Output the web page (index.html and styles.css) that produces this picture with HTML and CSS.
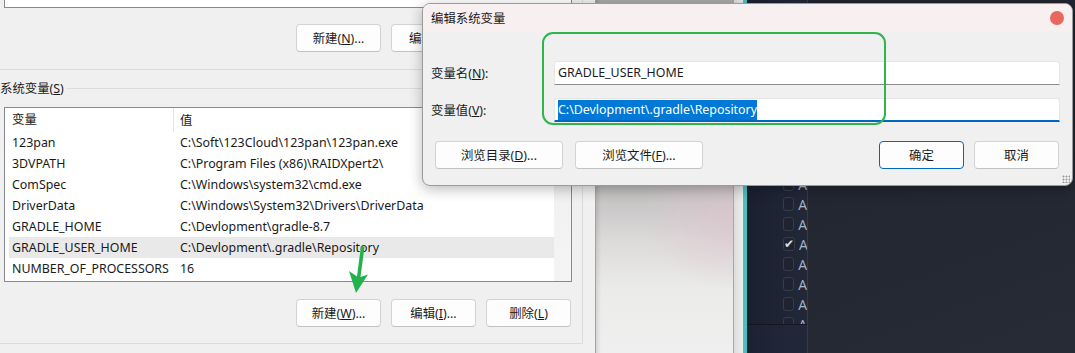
FILE: index.html
```html
<!doctype html>
<html lang="zh-CN">
  <head>
    <meta charset="UTF-8" />
    <title>环境变量</title>
    <link rel="stylesheet" href="styles.css">
  </head>
  <body>
    <div class="desktop">
      <section class="env-window">
        <div class="group group-user">
          <div class="listbox listbox-top">
            <div class="row row-cut">
              <span class="col-name">IDEA_USER_PATH</span>
              <span class="col-value">C:\Users\app\AppData\Temp</span>
            </div>
          </div>
          <div class="btn-row">
            <button class="btn">新建(<u>N</u>)...</button>
            <button class="btn">编辑(<u>E</u>)...</button>
            <button class="btn">删除(<u>D</u>)</button>
          </div>
        </div>

        <fieldset class="group group-system">
          <legend>系统变量(<u>S</u>)</legend>
          <div class="listbox">
            <div class="list-body">
              <div class="list-head">
                <span class="col-name">变量</span>
                <span class="col-value">值</span>
              </div>
              <div class="row"><span class="col-name">123pan</span><span class="col-value">C:\Soft\123Cloud\123pan\123pan.exe</span></div>
              <div class="row"><span class="col-name">3DVPATH</span><span class="col-value">C:\Program Files (x86)\RAIDXpert2\</span></div>
              <div class="row"><span class="col-name">ComSpec</span><span class="col-value">C:\Windows\system32\cmd.exe</span></div>
              <div class="row"><span class="col-name">DriverData</span><span class="col-value">C:\Windows\System32\Drivers\DriverData</span></div>
              <div class="row"><span class="col-name">GRADLE_HOME</span><span class="col-value">C:\Devlopment\gradle-8.7</span></div>
              <div class="row selected"><span class="col-name">GRADLE_USER_HOME</span><span class="col-value">C:\Devlopment\.gradle\Repository</span></div>
              <div class="row"><span class="col-name">NUMBER_OF_PROCESSORS</span><span class="col-value">16</span></div>
            </div>
            <div class="scrollbar"></div>
          </div>
          <div class="btn-row">
            <button class="btn">新建(<u>W</u>)...</button>
            <button class="btn">编辑(<u>I</u>)...</button>
            <button class="btn">删除(<u>L</u>)</button>
          </div>
        </fieldset>
      </section>

      <div class="wallpaper"></div>
      <div class="window-edge"></div>

      <section class="dark-app">
        <div class="filter-col">
          <ul class="check-list">
            <li><span class="box"></span>A</li>
            <li><span class="box"></span>A</li>
            <li><span class="box"></span>A</li>
            <li><span class="box"></span>A</li>
            <li><span class="box"></span>A</li>
            <li><span class="box"></span>A</li>
            <li><span class="box"></span>A</li>
            <li><span class="box"></span>A</li>
            <li><span class="box"></span>A</li>
            <li><span class="box"></span>A</li>
            <li><span class="box"></span>A</li>
            <li><span class="box checked">✔</span>A</li>
            <li><span class="box"></span>A</li>
            <li><span class="box"></span>A</li>
            <li><span class="box"></span>A</li>
            <li><span class="box"></span>A</li>
          </ul>
          <div class="filter-foot"></div>
        </div>
        <div class="dark-main"></div>
      </section>

      <!-- edit dialog floats over the other windows -->
      <div class="dialog">
        <div class="dialog-title">
          <span>编辑系统变量</span>
          <span class="close-dot"></span>
        </div>
        <div class="dialog-form">
          <label>变量名(<u>N</u>):</label>
          <div class="field">GRADLE_USER_HOME</div>
          <label>变量值(<u>V</u>):</label>
          <div class="field focused"><span class="sel">C:\Devlopment\.gradle\Repository</span></div>
        </div>
        <div class="dialog-buttons">
          <button class="btn btn-wide">浏览目录(<u>D</u>)...</button>
          <button class="btn btn-wide">浏览文件(<u>F</u>)...</button>
          <span class="spacer"></span>
          <button class="btn btn-default">确定</button>
          <button class="btn">取消</button>
        </div>
        <div class="mark-box"></div>
        <span class="grip"></span>
      </div>

      <svg class="arrow" width="40" height="60" viewBox="0 0 40 60">
        <path d="M21 6 L24.5 7 L20.5 37 L28 34.5 L16 53 L9 31 L17 36.5 Z" fill="#22b24c" />
      </svg>
    </div>
  </body>
</html>
```

FILE: styles.css
```css
body {
  margin: 0;
  overflow: hidden;
  font-family: "Noto Sans", "Noto Sans CJK SC", sans-serif;
  font-size: 12.4px;
  color: #1a1a1a;
}
.desktop {
  position: relative;
  display: flex;
  width: 1075px;
  height: 353px;
  overflow: hidden;
}

/* environment variables window */
.env-window {
  flex: none;
  width: 596px;
  box-sizing: border-box;
  border-right: 1px solid #a3a3a3;
  background: #f0f0f0;
}
.group {
  width: 583px;
  box-sizing: border-box;
  border: 1px solid #dcdcdc;
  border-left: none;
}
.group-user {
  height: 70px;
  border-top: none;
  padding: 0 10px 0 4px;
}
.group-system {
  margin: 10px 0 0;
  padding: 0 10px 16px 4px;
}
.group-system legend {
  margin-left: -4px;
  padding: 0 3px 0 0;
  line-height: 17px;
}
.listbox {
  display: flex;
  height: 175px;
  margin-top: 10px;
  box-sizing: border-box;
  border: 1px solid #86898f;
  background: #fff;
  overflow: hidden;
}
.listbox-top {
  display: block;
  height: 8px;
  margin-top: 0;
  border-top: none;
}
.row-cut {
  margin-top: -18px;
}
.list-body {
  flex: 1;
  padding-left: 4px;
}
.scrollbar {
  width: 17px;
  background: linear-gradient(#e9e9e9, #f2f2f2 60%, #f4f4f4);
}
.list-head,
.row {
  display: flex;
  align-items: center;
  white-space: nowrap;
}
.list-head {
  height: 24px;
}
.row {
  height: 21px;
}
.row.selected {
  background: #e9e9e9;
}
.col-name {
  width: 165px;
  box-sizing: border-box;
  padding-left: 3px;
  overflow: hidden;
}
.list-head .col-name {
  border-right: 1px solid #e3e3e3;
  line-height: 24px;
}
.col-value {
  padding-left: 6px;
}
.btn-row {
  display: flex;
  justify-content: flex-end;
  gap: 10px;
  padding-right: 1px;
  margin-top: 16px;
}
.group-system .btn-row {
  margin-top: 17px;
}
.btn {
  width: 85px;
  height: 28px;
  box-sizing: border-box;
  padding: 0;
  border: 1px solid #d3d3d3;
  border-bottom-color: #c2c2c2;
  border-radius: 4px;
  background: #fdfdfd;
  font: inherit;
  color: #1a1a1a;
}

/* desktop behind */
.wallpaper {
  width: 137px;
  flex: none;
  background:
    linear-gradient(90deg, rgba(0, 0, 0, 0.1), transparent 5px),
    radial-gradient(ellipse 90px 70px at 100% 62%, rgba(222, 196, 206, 0.7), transparent),
    linear-gradient(#a9a9a9 0%, #bdbcbc 52%, #dcdad9 68%, #ebebea 82%, #efefef 100%);
}
.window-edge {
  width: 10px;
  flex: none;
  box-sizing: border-box;
  border-left: 1px solid #a7a7a7;
  background: linear-gradient(90deg, #dcdcdc, #ececec);
}

/* dark app on the right */
.dark-app {
  flex: 1;
  display: flex;
  border-left: 4px solid #4cc0bf;
  background: #1d2130;
}
.filter-col {
  display: flex;
  flex-direction: column;
  width: 61px;
  box-sizing: border-box;
  border-right: 1px solid #363a45;
  background: linear-gradient(90deg, #1b2030, #222838);
}
.check-list {
  height: 324px;
  margin: 0;
  padding: 14px 0 0 36px;
  list-style: none;
  overflow: hidden;
  box-sizing: border-box;
}
.check-list li {
  display: flex;
  align-items: center;
  gap: 4px;
  height: 20px;
  font-family: "Open Sans", sans-serif;
  font-size: 14px;
  color: #a9b6ca;
}
.box {
  width: 14px;
  height: 14px;
  box-sizing: border-box;
  border: 1px solid #363c4b;
  border-radius: 3px;
  background: #1e2231;
  font-size: 12px;
  line-height: 12px;
  text-align: center;
  color: #dcdcdc;
}
.filter-foot {
  flex: 1;
  border-top: 1px solid #14171f;
  background: linear-gradient(90deg, #1d2233, #22283a);
}
.dark-main {
  flex: 1;
  background: linear-gradient(160deg, #1f232c, #272b36);
}

/* edit dialog */
.dialog {
  position: absolute;
  left: 422px;
  top: 3px;
  width: 651px;
  height: 183px;
  box-sizing: border-box;
  border: 1px solid #9b9b9b;
  border-radius: 8px;
  background: #f0f0f0;
  box-shadow: 0 3px 14px rgba(0, 0, 0, 0.28);
  overflow: hidden;
}
.dialog-title {
  display: flex;
  align-items: center;
  justify-content: space-between;
  height: 28px;
  padding: 0 8px;
  background: #f8f0f0;
}
.close-dot {
  width: 14px;
  height: 14px;
  border-radius: 50%;
  background: #e9675c;
}
.dialog-form {
  display: grid;
  grid-template-columns: 123px 1fr;
  row-gap: 13px;
  align-items: center;
  padding: 29px 12px 0 8px;
}
.field {
  height: 24px;
  box-sizing: border-box;
  padding-left: 3px;
  border: 1px solid #e6e6e6;
  border-bottom: 1px solid #8b8b8b;
  border-radius: 3px 3px 0 0;
  background: #fff;
  line-height: 22px;
  white-space: nowrap;
}
.field.focused {
  border-bottom: 2px solid #0067c0;
}
.sel {
  padding: 1px 0 2px;
  background: #0078d7;
  color: #fff;
}
.dialog-buttons {
  display: flex;
  gap: 12px;
  margin-top: 19px;
  padding: 0 13px 0 12px;
}
.btn-wide {
  width: 128px;
}
.spacer {
  flex: 1;
}
.btn-default {
  border: 1px solid #0067c0;
  margin-right: -2px;
}
.mark-box {
  position: absolute;
  left: 119px;
  top: 28px;
  width: 344px;
  height: 93px;
  box-sizing: border-box;
  border: 2px solid #2fb54f;
  border-radius: 11px;
}
.grip {
  position: absolute;
  right: 2px;
  bottom: 2px;
  width: 8px;
  height: 8px;
  background: radial-gradient(circle, #9a9a9a 0.8px, transparent 1.2px) 0 0 / 3px 3px;
}
.arrow {
  position: absolute;
  left: 340px;
  top: 240px;
}
```
